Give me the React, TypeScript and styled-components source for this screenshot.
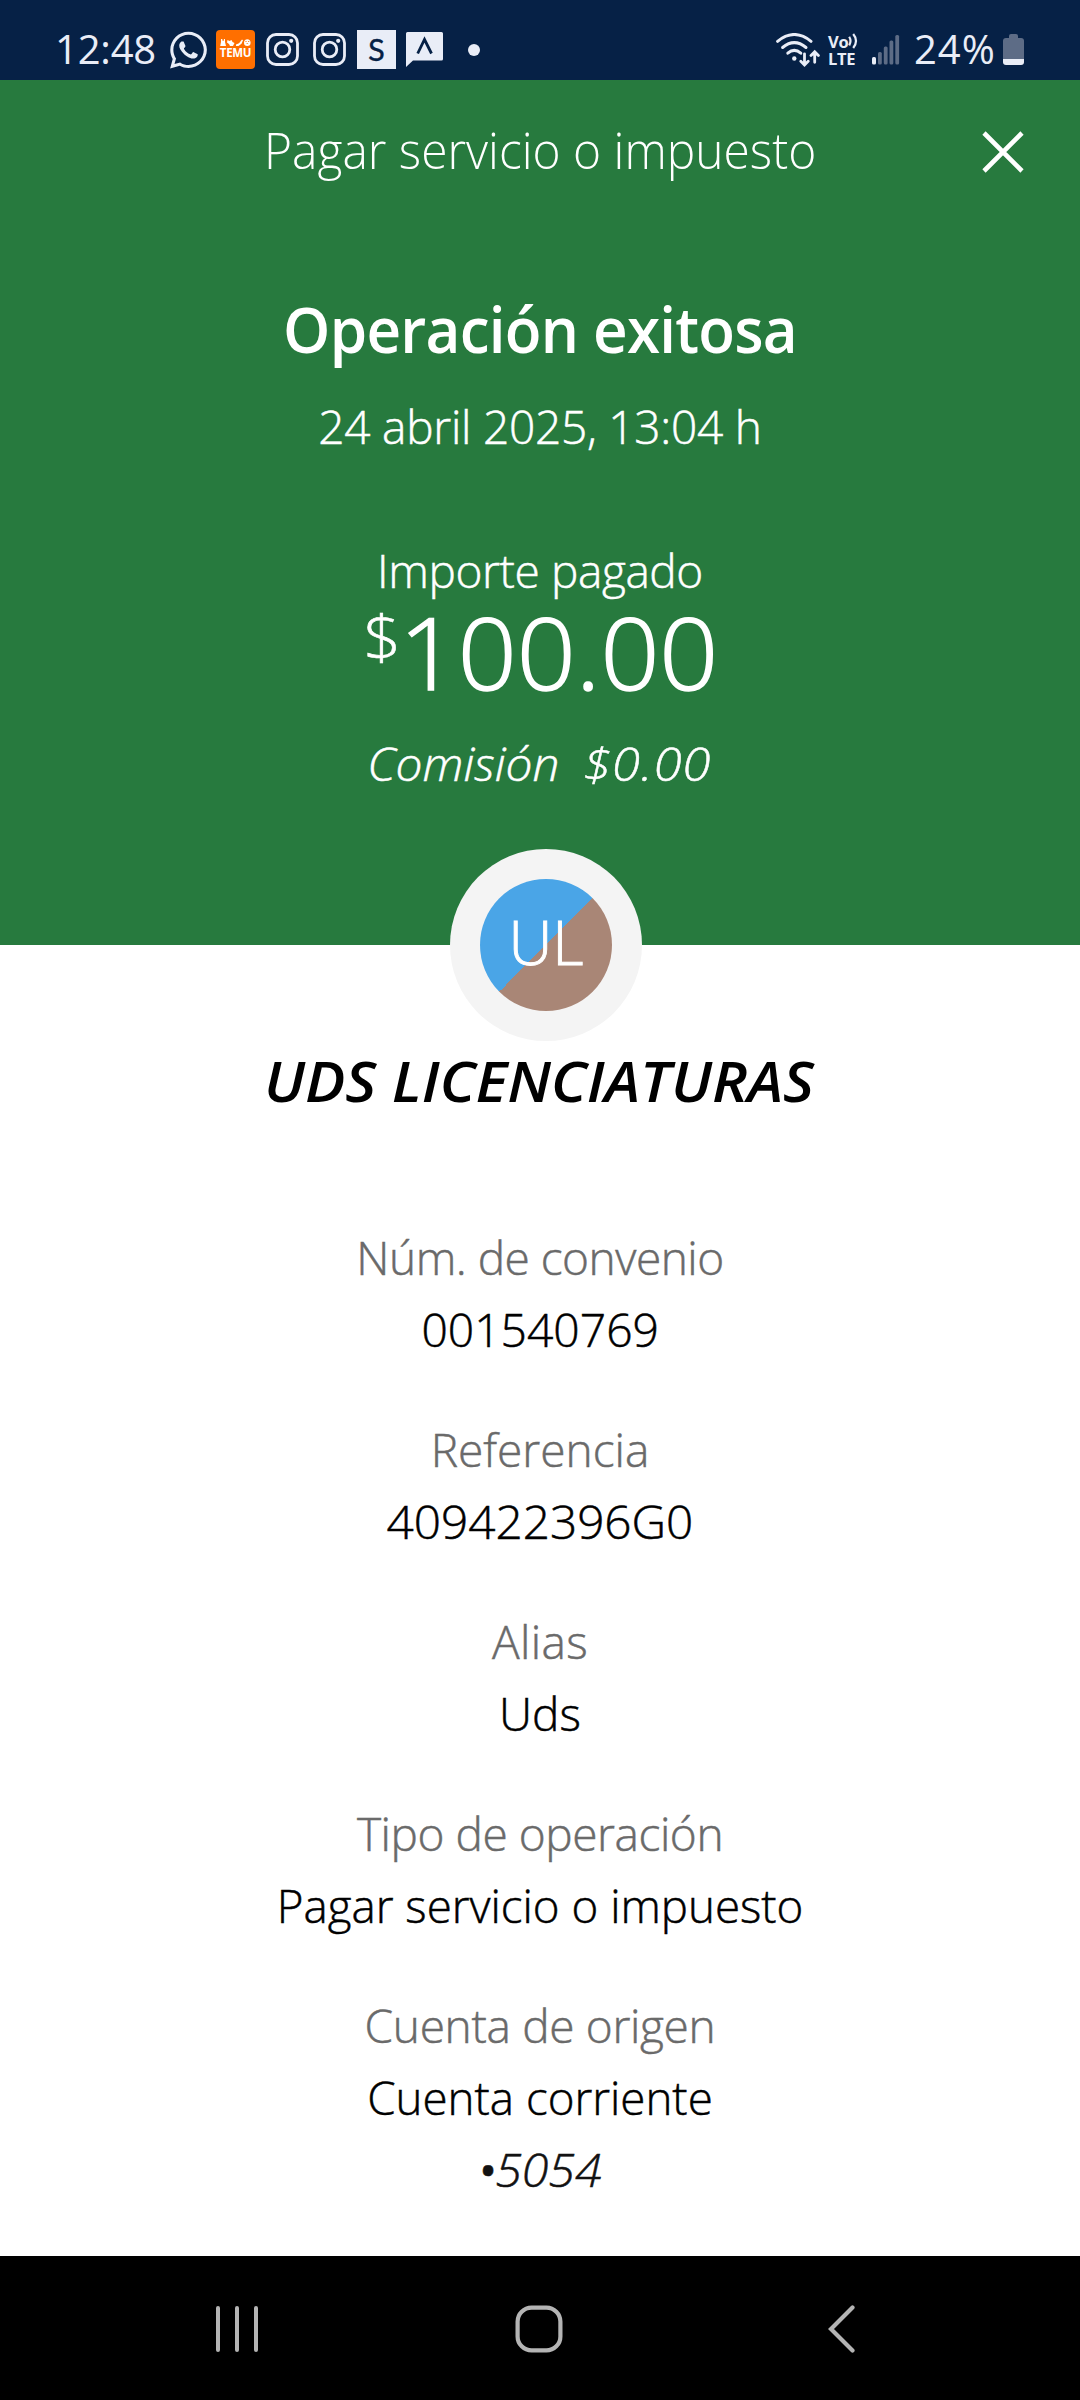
import React from "react";
import styled, { createGlobalStyle } from "styled-components";
import { FaWhatsapp } from "react-icons/fa";

const Global = createGlobalStyle`
  body {
    margin: 0;
    background: #fff;
    font-family: "Open Sans", "Noto Sans", sans-serif;
  }
  * { box-sizing: border-box; }
  svg { display: block; flex: none; }
`;

const ink = "#e9edf7";
const navy = "#062146";

const Screen = styled.div`
  width: 1080px;
  height: 2400px;
  display: flex;
  flex-direction: column;
  overflow: hidden;
`;

/* ---------- status bar ---------- */

const StatusBar = styled.header`
  height: 80px;
  flex: none;
  display: flex;
  align-items: center;
  justify-content: space-between;
  padding: 19px 56px 0 55px;
  background: ${navy};
  color: ${ink};
`;

const StatusGroup = styled.div`
  display: flex;
  align-items: center;
`;

const StatusText = styled.span<{ $width: number; $spacing: number }>`
  width: ${(p) => p.$width}px;
  margin-top: -1px;
  font-size: 40px;
  line-height: 40px;
  letter-spacing: ${(p) => p.$spacing}px;
  white-space: nowrap;
`;

const Slot = styled.span<{ $left: number }>`
  display: flex;
  margin-left: ${(p) => p.$left}px;
`;

const WhatsApp = styled(FaWhatsapp)`
  width: 37px;
  height: 42px;
`;

const TemuTile = styled.span`
  width: 39px;
  height: 39px;
  border-radius: 4px;
  background: #ff6f00;
  color: #fff;
  display: flex;
  flex-direction: column;
  align-items: center;
  justify-content: center;
  padding-bottom: 2px;
`;

const TemuWord = styled.span`
  font: 700 11.5px/11px "Open Sans", sans-serif;
  letter-spacing: -0.3px;
`;

const LetterTile = styled.span`
  width: 39px;
  height: 39px;
  background: ${ink};
  color: ${navy};
  display: flex;
  align-items: center;
  justify-content: center;
  font: 400 31px/39px Lato, sans-serif;
  -webkit-text-stroke: 0.3px ${navy};
`;

const Dot = styled.span`
  width: 12px;
  height: 12px;
  border-radius: 50%;
  background: ${ink};
`;

const Volte = styled.span`
  width: 31px;
  display: flex;
  flex-direction: column;
  font-weight: 700;
  font-size: 16.5px;
  line-height: 17px;
`;

const VolteTop = styled.span`
  display: flex;
  align-items: center;
`;

const VolteWord = styled.span`
  letter-spacing: -0.3px;
`;

const Battery = styled.span`
  width: 21px;
  display: flex;
  flex-direction: column;
  align-items: center;
`;

const BatteryCap = styled.span`
  width: 9px;
  height: 4px;
  border-radius: 2px 2px 0 0;
  background: #5d6c86;
`;

const BatteryBody = styled.span`
  width: 21px;
  height: 27px;
  border-radius: 3px;
  background: linear-gradient(#5d6c86 0 21px, ${ink} 21px);
`;

/* ---------- green header ---------- */

const Hero = styled.section`
  height: 865px;
  flex: none;
  display: flex;
  flex-direction: column;
  align-items: center;
  background: #277a3e;
  color: #fff;
`;

const TitleBar = styled.div`
  width: 100%;
  height: 140px;
  display: grid;
  grid-template-columns: 1fr auto 1fr;
  align-items: center;
`;

const Title = styled.h1`
  grid-column: 2;
  margin: 0;
  font-size: 50px;
  line-height: 70px;
  font-weight: 300;
  transform: scaleX(0.958);
`;

const CloseButton = styled.button`
  justify-self: end;
  margin: 4px 55px 0 0;
  padding: 0;
  border: 0;
  background: none;
`;

const Headline = styled.h2`
  margin: 64px 0 16px;
  font-size: 63px;
  line-height: 90px;
  font-weight: 600;
  letter-spacing: -0.8px;
  transform: scaleX(0.955);
`;

const Text = styled.div<{ $spacing?: number; $tone?: string; $italic?: boolean; $stretch?: number }>`
  font-size: 46px;
  line-height: 72px;
  font-weight: 300;
  font-style: ${(p) => (p.$italic ? "italic" : "normal")};
  letter-spacing: ${(p) => p.$spacing || 0}px;
  color: ${(p) => p.$tone || "inherit"};
  white-space: nowrap;
  transform: scaleX(${(p) => p.$stretch || 1});
  -webkit-text-stroke: 0.5px currentColor;
`;

const PaidBlock = styled.div`
  margin-top: 72px;
  display: flex;
  flex-direction: column;
  align-items: center;
`;

const Amount = styled.div`
  height: 91px;
  display: flex;
  align-items: center;
  gap: 4px;
  margin-right: 2px;
  font-size: 100px;
  line-height: 91px;
  font-weight: 300;
`;

const Figure = styled.span`
  transform: scaleX(1.033);
  -webkit-text-stroke: 1.5px currentColor;
`;

const Currency = styled.span`
  font-size: 61px;
  line-height: 62px;
  margin-bottom: 29px;
  transform: scaleX(1.08);
  -webkit-text-stroke: 0.6px currentColor;
`;

const Fee = styled.div`
  margin: 30px 4px 0 0;
  display: flex;
  gap: 33px;
`;

/* ---------- details ---------- */

const Details = styled.main`
  flex: 1;
  display: flex;
  flex-direction: column;
  align-items: center;
  background: #fff;
  color: #000;
`;

const AvatarRing = styled.div`
  width: 192px;
  height: 192px;
  margin: -96px 0 0 12px;
  border-radius: 50%;
  background: #f4f4f4;
  display: flex;
  align-items: center;
  justify-content: center;
`;

const Avatar = styled.div`
  width: 132px;
  height: 132px;
  border-radius: 50%;
  background: linear-gradient(135deg, #4aa5e7 50%, #a98676 50%);
  color: #fff;
  font-size: 61px;
  line-height: 125px;
  font-weight: 300;
  text-align: center;
  -webkit-text-stroke: 0.9px currentColor;
`;

const Payee = styled.h3`
  margin: 0 2px 101px 0;
  font-size: 56px;
  line-height: 79px;
  font-weight: 600;
  font-style: italic;
  transform: scaleX(1.07);
`;

const FieldList = styled.div`
  display: flex;
  flex-direction: column;
  gap: 48px;
`;

const Field = styled.div`
  display: flex;
  flex-direction: column;
  align-items: center;
`;

const Bullet = styled.span`
  font-weight: 500;
  letter-spacing: -1px;
`;

/* ---------- navigation bar ---------- */

const NavBar = styled.nav`
  height: 144px;
  flex: none;
  display: flex;
  align-items: center;
  padding: 2px 0 0 213px;
  background: #000;
`;

const NavItem = styled.span<{ $left?: number }>`
  display: flex;
  width: 48px;
  margin-left: ${(p) => p.$left || 0}px;
`;

function Instagram() {
  return (
    <svg width="33" height="33" viewBox="0 0 33 33" fill="none" stroke={ink} strokeWidth="2.8">
      <rect x="1.5" y="1.5" width="30" height="30" rx="8.5" />
      <circle cx="16.5" cy="16.5" r="7.3" />
      <circle cx="25.2" cy="7.8" r="2.1" fill={ink} stroke="none" />
    </svg>
  );
}

function TemuFigures() {
  return (
    <svg width="31" height="8" viewBox="0 0 31 8" fill="#fff">
      <path d="M1 0h1.2l.5 2h.8L4 0h1v3l1 4H.2L1 3z" />
      <path d="M7.5 1l2 1 2-1 1 2 2 1-1.5 3H10L9 5 7 3.5z" />
      <path d="M16 5.5l3-1.2L22 .5l1 .8-1.5 3.4L18.5 7H16z" />
      <path
        d="M24 3.8C24 1.5 25.3.3 27.3.3s3.3 1.2 3.3 3.5S29.5 7 27.3 7 24 6.1 24 3.8zm1.5-.8h1v-1h-1zm2.7 0h1v-1h-1zm-2 1.3c.6.8 1.6.8 2.2 0z"
        fillRule="evenodd"
      />
    </svg>
  );
}

function ChatCaret() {
  return (
    <svg width="37" height="35" viewBox="0 0 37 35">
      <path d="M1.5 0h34A1.5 1.5 0 0 1 37 1.5v25.5a1.5 1.5 0 0 1-1.5 1.5H7L0 35V1.5A1.5 1.5 0 0 1 1.5 0z" fill={ink} />
      <path d="M11.7 21.5L18.5 7.5l7 14" fill="none" stroke={navy} strokeWidth="2.8" />
    </svg>
  );
}

function Wifi() {
  return (
    <svg width="44" height="34" viewBox="0 0 44 34" fill="none" stroke={ink} strokeLinecap="round">
      <path d="M1.6 8.3Q18.3-5.3 35 8.3" strokeWidth="3" />
      <path d="M6.6 14.5Q18.3 4.8 30 14.5" strokeWidth="3" />
      <path d="M11.8 20.2Q18.3 14.6 24.8 20.2" strokeWidth="3" />
      <circle cx="18.3" cy="25.5" r="2.2" fill={ink} stroke="none" />
      <path d="M28.5 20.8v11M24.8 28.2l3.7 3.7 3.7-3.7M38.7 29.3V19M35 22.5l3.7-3.7 3.7 3.7" strokeWidth="2.8" />
    </svg>
  );
}

function Waves() {
  return (
    <svg width="11" height="16" viewBox="0 0 11 16" fill="none" stroke={ink} strokeWidth="2.2">
      <path d="M1.2 3.8q2.6 4.3 0 8.5M5.2 1q5.6 6.8 0 14" />
    </svg>
  );
}

function Signal() {
  return (
    <svg width="28" height="30" viewBox="0 0 28 30" fill="#5d6c86">
      <rect x="0" y="22" width="4" height="7.5" rx="1.5" fill={ink} />
      <rect x="6" y="17" width="3.8" height="12.5" rx="1.5" />
      <rect x="11.8" y="11.5" width="3.8" height="18" rx="1.5" />
      <rect x="17.5" y="5.5" width="3.8" height="24" rx="1.5" />
      <rect x="23.3" y="0" width="3.8" height="29.5" rx="1.5" />
    </svg>
  );
}

const fields = [
  { label: "Núm. de convenio", ls: -0.5, value: "001540769", vx: 1.005 },
  { label: "Referencia", ls: 0, value: "409422396G0", vx: 1.037 },
  { label: "Alias", ls: 0.4, value: "Uds", vx: 1 },
  { label: "Tipo de operación", ls: -0.44, value: "Pagar servicio o impuesto", vx: 0.993 },
  { label: "Cuenta de origen", ls: -0.33, value: "Cuenta corriente", vx: 0.993, account: "5054" },
];

export default function App() {
  return (
    <Screen>
      <Global />
      <StatusBar>
        <StatusGroup>
          <StatusText $width={101} $spacing={-0.2}>12:48</StatusText>
          <Slot $left={14}><WhatsApp /></Slot>
          <Slot $left={9}>
            <TemuTile>
              <TemuFigures />
              <TemuWord>TEMU</TemuWord>
            </TemuTile>
          </Slot>
          <Slot $left={11}><Instagram /></Slot>
          <Slot $left={14}><Instagram /></Slot>
          <Slot $left={11}><LetterTile>S</LetterTile></Slot>
          <Slot $left={10}><ChatCaret /></Slot>
          <Slot $left={25}><Dot /></Slot>
        </StatusGroup>
        <StatusGroup>
          <Wifi />
          <Slot $left={8}>
            <Volte>
              <VolteTop><VolteWord>Vo</VolteWord><Waves /></VolteTop>
              <VolteWord>LTE</VolteWord>
            </Volte>
          </Slot>
          <Slot $left={13}><Signal /></Slot>
          <Slot $left={14}><StatusText $width={81} $spacing={1}>24%</StatusText></Slot>
          <Slot $left={8}>
            <Battery><BatteryCap /><BatteryBody /></Battery>
          </Slot>
        </StatusGroup>
      </StatusBar>

      <Hero>
        <TitleBar>
          <Title>Pagar servicio o impuesto</Title>
          <CloseButton aria-label="Cerrar">
            <svg width="44" height="44" viewBox="0 0 44 44" stroke="#fff" strokeWidth="4.6">
              <path d="M3 3l38 38M41 3L3 41" />
            </svg>
          </CloseButton>
        </TitleBar>
        <Headline>Operación exitosa</Headline>
        <Text $spacing={-0.25}>24 abril 2025, 13:04 h</Text>
        <PaidBlock>
          <Text $spacing={-0.4}>Importe pagado</Text>
          <Amount><Currency>$</Currency><Figure>100.00</Figure></Amount>
          <Fee>
            <Text $italic $stretch={1.04}>Comisión</Text>
            <Text $italic $stretch={1.1} $spacing={1}>$0.00</Text>
          </Fee>
        </PaidBlock>
      </Hero>

      <Details>
        <AvatarRing><Avatar>UL</Avatar></AvatarRing>
        <Payee>UDS LICENCIATURAS</Payee>
        <FieldList>
          {fields.map((f) => (
            <Field key={f.label}>
              <Text $spacing={f.ls} $tone="#6a6a6a">{f.label}</Text>
              <Text $stretch={f.vx}>{f.value}</Text>
              {f.account && (
                <Text $italic $stretch={1.05} $tone="#121212"><Bullet>•</Bullet>{f.account}</Text>
              )}
            </Field>
          ))}
        </FieldList>
      </Details>

      <NavBar>
        <NavItem>
          <svg width="48" height="48" viewBox="0 0 48 48" stroke="#b4b4b4" strokeWidth="4" strokeLinecap="round">
            <path d="M5 3v42M24 3v42M43 3v42" />
          </svg>
        </NavItem>
        <NavItem $left={254}>
          <svg width="48" height="48" viewBox="0 0 48 48" fill="none" stroke="#b4b4b4" strokeWidth="4.2">
            <rect x="2.6" y="2.6" width="42.8" height="42.8" rx="14" />
          </svg>
        </NavItem>
        <NavItem $left={255}>
          <svg width="48" height="48" viewBox="0 0 48 48" fill="none" stroke="#b4b4b4" strokeWidth="4.2" strokeLinecap="round">
            <path d="M34.5 2.5L13 24l21.5 21.5" />
          </svg>
        </NavItem>
      </NavBar>
    </Screen>
  );
}
